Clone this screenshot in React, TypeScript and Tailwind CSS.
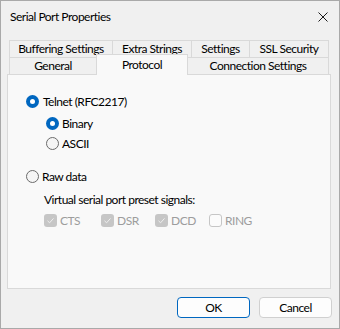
const FONT = { fontFamily: 'Lato, "Liberation Sans", sans-serif' };

function Radio({ checked }: { checked?: boolean }) {
  return checked ? (
    <span className="w-[13px] h-[13px] rounded-full bg-[#0067c0] flex items-center justify-center shrink-0">
      <span className="w-[5px] h-[5px] rounded-full bg-white" />
    </span>
  ) : (
    <span className="w-[13px] h-[13px] rounded-full border border-[#6b6b6b] bg-[#f5f5f5] shrink-0" />
  );
}

function Check({ checked }: { checked?: boolean }) {
  return checked ? (
    <span className="w-[13px] h-[13px] rounded-[3px] bg-[#c6c6c6] flex items-center justify-center shrink-0">
      <svg width="9" height="9" viewBox="0 0 9 9" fill="none">
        <path d="M1.5 4.8 L3.6 6.8 L7.5 2.4" stroke="#efefef" strokeWidth="1" />
      </svg>
    </span>
  ) : (
    <span className="w-[13px] h-[13px] rounded-[3px] border border-[#c6c6c6] bg-[#fbfbfb] shrink-0" />
  );
}

function Tab({ label, w }: { label: string; w: string }) {
  return (
    <div className={`${w} h-[18px] flex items-center justify-center border border-[#d9d9d9] -ml-px first:ml-0 bg-[#f0f0f0]`}>
      {label}
    </div>
  );
}

export default function App() {
  return (
    <div
      className="w-[340px] h-[329px] bg-[#f0f0f0] border border-[#a9a9a9] flex flex-col text-[12px] tracking-[-0.5px] text-black leading-none"
      style={FONT}
    >
      {/* Title bar */}
      <div className="h-[31px] flex items-center justify-between pl-[9px] pr-[10px]">
        <span>Serial Port Properties</span>
        <svg width="10" height="10" viewBox="0 0 10 10" className="mr-[1px]">
          <path d="M0.5 0.5 L9.5 9.5 M9.5 0.5 L0.5 9.5" stroke="#1a1a1a" strokeWidth="1" />
        </svg>
      </div>

      {/* Tabs */}
      <div className="pt-[8px] pl-[8px] flex flex-col">
        <div className="flex">
          <Tab label="Buffering Settings" w="w-[104px]" />
          <Tab label="Extra Strings" w="w-[80px]" />
          <Tab label="Settings" w="w-[59px]" />
          <Tab label="SSL Security" w="w-[80px]" />
        </div>
        <div className="flex -mt-px">
          <Tab label="General" w="w-[88px]" />
          <div className="w-[92px] h-[21px] -mt-[3px] -ml-px border border-b-0 border-[#d9d9d9] bg-[#f9f9f9] flex items-start justify-center pt-[4px] z-10 relative -mb-px">
            Protocol
          </div>
          <Tab label="Connection Settings" w="w-[142px]" />
        </div>
      </div>

      {/* Panel */}
      <div className="ml-[6px] w-[324px] h-[215px] -mt-px border border-[#d9d9d9] bg-[#f9f9f9] flex flex-col pl-[18px] pt-[20px]">
        <div className="flex items-center gap-[4px] h-[13px]">
          <Radio checked />
          <span>Telnet (RFC2217)</span>
        </div>
        <div className="flex items-center gap-[3px] h-[13px] ml-[20px] mt-[9px]">
          <Radio checked />
          <span>Binary</span>
        </div>
        <div className="flex items-center gap-[3px] h-[13px] ml-[20px] mt-[7px]">
          <Radio />
          <span>ASCII</span>
        </div>
        <div className="flex items-center gap-[3px] h-[13px] mt-[20px]">
          <Radio />
          <span>Raw data</span>
        </div>
        <div className="ml-[18px] mt-[10px] h-[13px] flex items-center">Virtual serial port preset signals:</div>
        <div className="ml-[18px] mt-[8px] h-[13px] flex items-center text-[#9d9d9d]">
          <div className="w-[57px] flex items-center gap-[3px]">
            <Check checked />
            <span>CTS</span>
          </div>
          <div className="w-[54px] flex items-center gap-[3px]">
            <Check checked />
            <span>DSR</span>
          </div>
          <div className="w-[54px] flex items-center gap-[3px]">
            <Check checked />
            <span>DCD</span>
          </div>
          <div className="flex items-center gap-[3px]">
            <Check />
            <span>RING</span>
          </div>
        </div>
      </div>

      {/* Buttons */}
      <div className="flex justify-end gap-[9px] pr-[7px] pt-[8px]">
        <button className="w-[73px] h-[21px] rounded-[4px] border border-[#0067c0] bg-[#fdfdfd] flex items-center justify-center">
          OK
        </button>
        <button className="w-[73px] h-[21px] rounded-[4px] border border-[#d0d0d0] bg-[#fdfdfd] flex items-center justify-center">
          Cancel
        </button>
      </div>
    </div>
  );
}
